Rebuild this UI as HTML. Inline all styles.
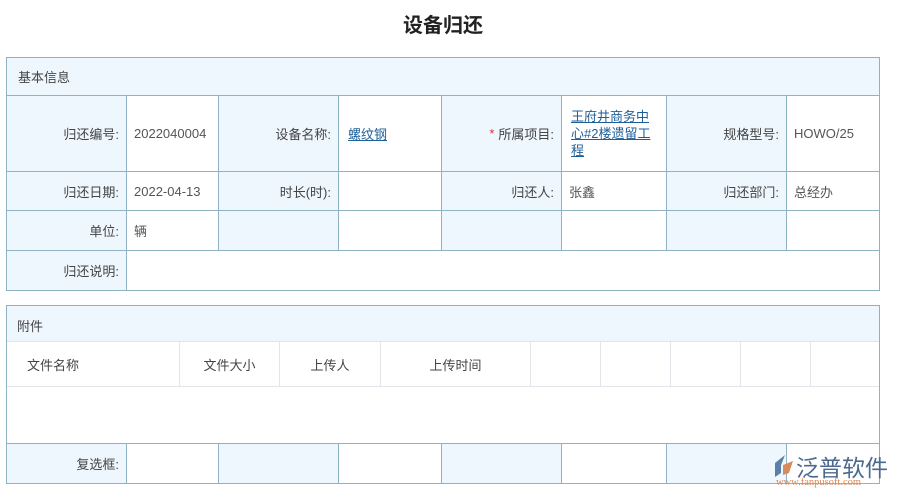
<!DOCTYPE html>
<html><head><meta charset="utf-8"><style>
*{margin:0;padding:0;box-sizing:border-box}
body{width:900px;height:498px;background:#fff;font-family:"Liberation Sans","Noto Sans CJK SC",sans-serif;font-size:13px;color:#444;position:relative;overflow:hidden}
.a{position:absolute}
.t{left:0;top:9px;width:886px;text-align:center;font-size:20px;font-weight:bold;color:#222}
.c{position:absolute;border:1px solid #8fb2c4;display:flex;align-items:center;padding:0 7px}
.l{background:#eef6fe;justify-content:flex-end}
.v{background:#fff;color:#555}
.g{position:absolute;border-right:1px solid #e2e6ea;height:45px;top:342px;display:flex;align-items:center}
a{color:#1f5f99;text-decoration:underline}
</style></head><body>
<div class="a t">设备归还</div>
<div class="c" style="left:6px;top:57px;width:874px;height:39px;background:#eef6fe;padding-left:11px">基本信息</div>

<div class="c l" style="left:6px;top:95px;width:121px;height:77px">归还编号:</div>
<div class="c v" style="left:126px;top:95px;width:93px;height:77px">2022040004</div>
<div class="c l" style="left:218px;top:95px;width:121px;height:77px">设备名称:</div>
<div class="c v" style="left:338px;top:95px;width:104px;height:77px;padding-left:9px"><a>螺纹钢</a></div>
<div class="c l" style="left:441px;top:95px;width:121px;height:77px"><span style="color:#d33;margin-right:4px">*</span>所属项目:</div>
<div class="c v" style="left:561px;top:95px;width:106px;height:77px;line-height:17px;padding-left:9px"><a>王府井商务中心#2楼遗留工程</a></div>
<div class="c l" style="left:666px;top:95px;width:121px;height:77px">规格型号:</div>
<div class="c v" style="left:786px;top:95px;width:94px;height:77px">HOWO/25</div>

<div class="c l" style="left:6px;top:171px;width:121px;height:40px">归还日期:</div>
<div class="c v" style="left:126px;top:171px;width:93px;height:40px">2022-04-13</div>
<div class="c l" style="left:218px;top:171px;width:121px;height:40px">时长(时):</div>
<div class="c v" style="left:338px;top:171px;width:104px;height:40px"></div>
<div class="c l" style="left:441px;top:171px;width:121px;height:40px">归还人:</div>
<div class="c v" style="left:561px;top:171px;width:106px;height:40px">张鑫</div>
<div class="c l" style="left:666px;top:171px;width:121px;height:40px">归还部门:</div>
<div class="c v" style="left:786px;top:171px;width:94px;height:40px">总经办</div>

<div class="c l" style="left:6px;top:210px;width:121px;height:41px">单位:</div>
<div class="c v" style="left:126px;top:210px;width:93px;height:41px">辆</div>
<div class="c l" style="left:218px;top:210px;width:121px;height:41px"></div>
<div class="c v" style="left:338px;top:210px;width:104px;height:41px"></div>
<div class="c l" style="left:441px;top:210px;width:121px;height:41px"></div>
<div class="c v" style="left:561px;top:210px;width:106px;height:41px"></div>
<div class="c l" style="left:666px;top:210px;width:121px;height:41px"></div>
<div class="c v" style="left:786px;top:210px;width:94px;height:41px"></div>

<div class="c l" style="left:6px;top:250px;width:121px;height:41px">归还说明:</div>
<div class="c v" style="left:126px;top:250px;width:754px;height:41px"></div>

<div class="a" style="left:6px;top:305px;width:874px;height:179px;border:1px solid #8fb2c4"></div>
<div class="a" style="left:7px;top:306px;width:872px;height:36px;background:#eef6fe;border-bottom:1px solid #e2e6ea;padding:10px 0 0 10px">附件</div>
<div class="a" style="left:7px;top:386px;width:872px;border-top:1px solid #e2e6ea"></div>
<div class="g" style="left:7px;width:173px;padding-left:20px">文件名称</div>
<div class="g" style="left:180px;width:100px;justify-content:center">文件大小</div>
<div class="g" style="left:280px;width:101px;justify-content:center">上传人</div>
<div class="g" style="left:381px;width:150px;justify-content:center">上传时间</div>
<div class="g" style="left:531px;width:70px"></div>
<div class="g" style="left:601px;width:70px"></div>
<div class="g" style="left:671px;width:70px"></div>
<div class="g" style="left:741px;width:70px"></div>

<div class="c l" style="left:6px;top:443px;width:121px;height:41px">复选框:</div>
<div class="c v" style="left:126px;top:443px;width:93px;height:41px"></div>
<div class="c l" style="left:218px;top:443px;width:121px;height:41px"></div>
<div class="c v" style="left:338px;top:443px;width:104px;height:41px"></div>
<div class="c l" style="left:441px;top:443px;width:121px;height:41px"></div>
<div class="c v" style="left:561px;top:443px;width:106px;height:41px"></div>
<div class="c l" style="left:666px;top:443px;width:121px;height:41px"></div>
<div class="c v" style="left:786px;top:443px;width:94px;height:41px"></div>

<svg class="a" style="left:771px;top:453px" width="24" height="26" viewBox="0 0 24 26"><path d="M14 2 L4 10 L4 24 L10 20 L10 12 Z" fill="#5b7fa6"/><path d="M12 12 L22 8 L18 20 L12 22 Z" fill="#d98a5c"/></svg>
<div class="a" style="left:796px;top:449px;font-size:23px;color:#4b6a8e;letter-spacing:0px">泛普软件</div>
<div class="a" style="left:776px;top:477px;font-size:10.5px;color:#d98a5c;font-family:'Liberation Serif',serif">www.fanpusoft.com</div>
</body></html>
